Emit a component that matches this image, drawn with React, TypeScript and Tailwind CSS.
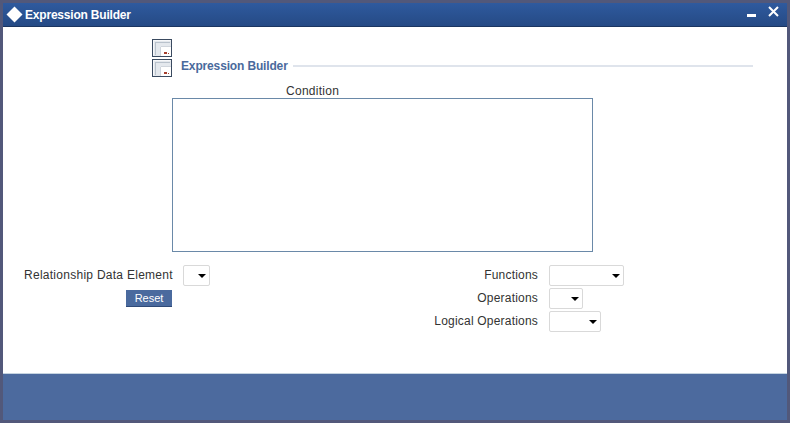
import { ReactNode } from 'react';

const PageIcon = () => (
  <svg width="20" height="18" viewBox="0 0 20 18" className="block">
    <rect x="0.5" y="0.5" width="19" height="17" fill="#e4e8ed" stroke="#3a4a60" />
    <path d="M1.5 16.5V1.5h17" fill="none" stroke="#f7f8fa" />
    <path d="M3 3h15v1H4v12H3z" fill="#b9c2cc" />
    <rect x="9" y="8" width="10" height="9" fill="#ffffff" />
    <path d="M9 7.5h10M8.5 8v9" stroke="#d0d5dc" />
    <rect x="12" y="13" width="3" height="2" fill="#a5402f" />
    <rect x="16" y="14" width="1" height="1" fill="#a5402f" />
  </svg>
);

const SelectBox = ({ width }: { width: string }) => (
  <div className={`flex h-[21px] items-center justify-end rounded-[2px] border border-[#d9d9d9] bg-white pr-[3px] ${width}`}>
    <svg width="8" height="4" viewBox="0 0 8 4">
      <path d="M0 0h8L4 4z" fill="#000000" />
    </svg>
  </div>
);

const Field = ({ label, children }: { label: string; children: ReactNode }) => (
  <div className="flex h-[21px] items-center">
    <span className="mb-[2px] w-[127px] text-right tracking-[0.2px] whitespace-nowrap">{label}</span>
    {children}
  </div>
);

const App = () => {
  return (
    <div className="flex h-[423px] w-[790px] flex-col border-x-[3px] border-y-[3px] border-[#52587a] bg-white font-['Liberation_Sans',Arial,sans-serif] text-[12px] tracking-[0.27px] text-[#333333]">
      <div className="flex h-[24px] shrink-0 items-center justify-between border-b border-[#1b3560] bg-gradient-to-b from-[#2f5a9e] to-[#254a85] pl-[3px] pr-[8px] text-white">
        <div className="flex items-center gap-[2px]">
          <svg width="17" height="17" viewBox="0 0 17 17">
            <path d="M8.5 0.5l8 8-8 8-8-8z" fill="#ffffff" />
          </svg>
          <span className="text-[12px] font-bold tracking-[-0.2px]">Expression Builder</span>
        </div>
        <div className="flex items-start gap-[12px] self-start pt-[3px]">
          <div className="mt-[8px] h-[3px] w-[9px] bg-white" />
          <svg width="11" height="11" viewBox="0 0 11 11">
            <path d="M1 1l9 9M10 1l-9 9" stroke="#ffffff" strokeWidth="2" fill="none" />
          </svg>
        </div>
      </div>

      <div className="flex min-h-0 flex-1 flex-col bg-white pt-[12px]">
        <div className="ml-[149px]">
          <PageIcon />
        </div>
        <div className="mr-[34px] mt-[2px] flex items-start">
          <div className="ml-[149px]">
            <PageIcon />
          </div>
          <span className="ml-[9px] -mt-[1px] whitespace-nowrap font-bold leading-[16px] tracking-[-0.15px] text-[#4a6a9c]">Expression Builder</span>
          <div className="ml-[5px] mt-[6px] h-[2px] flex-1 bg-[#dfe4ec]" />
        </div>

        <div className="ml-[169px] mt-[5px] w-[421px]">
          <div className="ml-[114px] h-[16px] leading-[18px]">Condition</div>
          <div className="h-[154px] border border-[#6a89a8] bg-white" />
        </div>

        <div className="mt-[13px] flex">
          <div className="ml-[21px] w-[387px]">
            <div className="flex h-[21px] items-center">
              <span className="mb-[2px] w-[148px] text-right whitespace-nowrap">Relationship Data Element</span>
              <div className="ml-[11px]">
                <SelectBox width="w-[27px]" />
              </div>
            </div>
            <div className="ml-[102px] mt-[4px] flex h-[17px] w-[46px] items-center justify-center border-b border-[#2f4a78] bg-[#4a6a9e] text-[11px] tracking-normal text-white">
              Reset
            </div>
          </div>
          <div className="flex flex-col gap-[2px]">
            <Field label="Functions">
              <div className="ml-[11px]">
                <SelectBox width="w-[75px]" />
              </div>
            </Field>
            <Field label="Operations">
              <div className="ml-[11px]">
                <SelectBox width="w-[34px]" />
              </div>
            </Field>
            <Field label="Logical Operations">
              <div className="ml-[11px]">
                <SelectBox width="w-[52px]" />
              </div>
            </Field>
          </div>
        </div>
      </div>

      <div className="h-[47px] shrink-0 border-t border-[#c5d3e0] bg-[#4c6a9e]" />
    </div>
  );
};

export default App;
